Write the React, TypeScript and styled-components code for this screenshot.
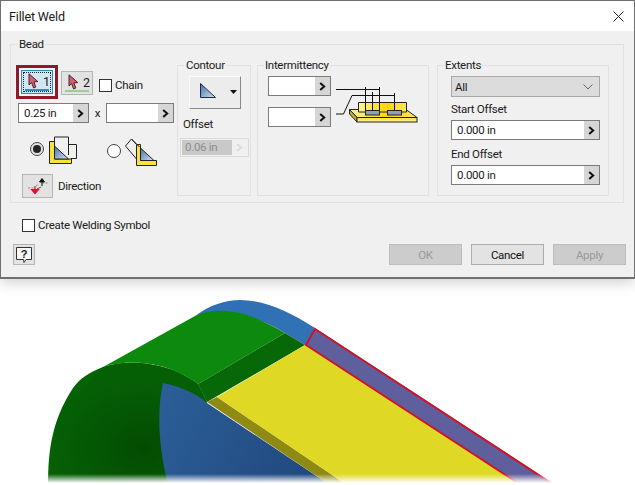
import React from "react";
import styled, { createGlobalStyle } from "styled-components";

const Global = createGlobalStyle`
  html, body { margin: 0; padding: 0; background: #fff; }
  body { width: 635px; height: 485px; overflow: hidden; font-family: "Roboto", "Noto Sans", sans-serif; font-size: 11.5px; letter-spacing: -0.3px; color: #1a1a1a; }
`;

const Page = styled.div`
  width: 635px;
  height: 485px;
  display: flex;
  flex-direction: column;
  overflow: hidden;
`;
const Window = styled.div`
  position: relative;
  z-index: 1;
  box-sizing: border-box;
  flex: none;
  height: 279px;
  border: 1px solid #6f6f6f;
  border-bottom-width: 2px;
  background: #f0f0f0;
  box-shadow: 0 3px 14px rgba(0, 0, 0, 0.2);
  display: flex;
  flex-direction: column;
`;
const TitleBar = styled.div`
  height: 30px;
  flex: none;
  background: #fff;
  display: flex;
  align-items: center;
  justify-content: space-between;
  padding: 0 10px 0 8px;
  font-size: 12.5px;
  letter-spacing: -0.15px;
`;
const Body = styled.div`
  flex: 1;
  padding: 13px 8px 0 9px;
  display: flex;
  flex-direction: column;
`;
const Bead = styled.div`
  position: relative;
  box-sizing: border-box;
  width: 614px;
  height: 159px;
  border: 1px solid #e2e2e2;
  padding-top: 20px;
  display: flex;
`;
const Legend = styled.span<{ $left: number }>`
  position: absolute;
  left: ${(p) => p.$left}px;
  top: -9px;
  line-height: 16px;
  padding: 0 1px;
  background: #f0f0f0;
`;
const LeftColumn = styled.div`
  width: 166px;
  flex: none;
  padding-left: 5px;
  box-sizing: border-box;
  display: flex;
  flex-direction: column;
`;
const PickRow = styled.div`
  height: 34px;
  display: flex;
  align-items: flex-start;
`;
const FocusFrame = styled.div`
  box-sizing: border-box;
  width: 42px;
  height: 34px;
  border: 3px solid #8e1b28;
  background: #f4f4f4;
  padding: 2px 2px;
`;
const PickButton = styled.div<{ $active?: boolean }>`
  position: relative;
  box-sizing: border-box;
  width: 32px;
  height: 24px;
  border: 1px solid ${(p) => (p.$active ? "#2f86b8" : "#b5b5b5")};
  background: ${(p) => (p.$active ? "#d3e6f3" : "#e2e2e2")};
  ${(p) => (p.$active ? "outline: 1px dotted #222; outline-offset: -3px;" : "")}
  display: flex;
  align-items: flex-start;
  font-size: 12.5px;
  padding: 2px 0 0 6px;
  gap: 4px;
  line-height: 17px;
`;
const Underline = styled.span<{ $color: string }>`
  position: absolute;
  left: 3px;
  right: 3px;
  bottom: 2px;
  height: 2px;
  background: ${(p) => p.$color};
`;
const SecondPick = styled.div`
  margin: 6px 0 0 3px;
`;
const CheckLabel = styled.label<{ $top?: number; $left?: number }>`
  display: flex;
  align-items: center;
  gap: 3px;
  height: 13px;
  line-height: 13px;
  margin-top: ${(p) => p.$top ?? 0}px;
  margin-left: ${(p) => p.$left ?? 0}px;
`;
const CheckBox = styled.span`
  box-sizing: border-box;
  width: 13px;
  height: 13px;
  border: 1px solid #333;
  background: #fff;
  flex: none;
`;
const SizeRow = styled.div`
  display: flex;
  margin: 4px 0 0 2px;
  align-items: center;
`;
const Times = styled.span`
  width: 17px;
  text-align: center;
`;
const InputBox = styled.div<{ $width: number; $height?: number }>`
  box-sizing: border-box;
  width: ${(p) => p.$width}px;
  height: ${(p) => p.$height ?? 20}px;
  flex: none;
  border: 1px solid #7b7b7b;
  background: #fff;
  display: flex;
  align-items: center;
  justify-content: space-between;
  line-height: 16px;
  padding-left: 5px;
`;
const Spinner = styled.span`
  width: 15px;
  align-self: stretch;
  background: #d6d6d6;
  display: flex;
  align-items: center;
  justify-content: center;
`;
const DisabledBox = styled.div`
  box-sizing: border-box;
  width: 69px;
  height: 19px;
  margin-top: 6px;
  border: 1px solid #dadada;
  padding: 1px;
  display: flex;
`;
const DisabledValue = styled.span`
  flex: 1;
  background: #c9c9c9;
  color: #8d8d8d;
  line-height: 15px;
  padding-left: 3px;
`;
const DisabledSpin = styled.span`
  width: 15px;
  display: flex;
  align-items: center;
  justify-content: center;
`;
const RadioRow = styled.div`
  display: flex;
  margin: 13px 0 0 14px;
  height: 30px;
`;
const Radio = styled.span<{ $checked?: boolean; $top: number }>`
  box-sizing: border-box;
  width: 14px;
  height: 14px;
  border-radius: 50%;
  border: 1px solid #444;
  background: ${(p) => (p.$checked ? "#e4e4e4" : "#fff")};
  margin-top: ${(p) => p.$top}px;
  display: flex;
  align-items: center;
  justify-content: center;
  flex: none;
  &::after {
    content: "";
    width: 8px;
    height: 8px;
    border-radius: 50%;
    background: ${(p) => (p.$checked ? "#222" : "transparent")};
  }
`;
const WeldOne = styled.svg`
  margin-left: 5px;
  flex: none;
`;
const WeldTwo = styled.svg`
  margin: 0 0 0 3px;
  flex: none;
`;
const SecondOption = styled.div`
  display: flex;
  margin-left: 28px;
`;
const DirectionRow = styled.div`
  display: flex;
  align-items: center;
  gap: 5px;
  margin: 8px 0 0 6px;
`;
const IconButton = styled.div<{ $w: number; $h: number }>`
  box-sizing: border-box;
  width: ${(p) => p.$w}px;
  height: ${(p) => p.$h}px;
  border: 1px solid #b5b5b5;
  background: #e2e2e2;
  display: flex;
  align-items: center;
  justify-content: center;
  flex: none;
`;
const Group = styled.div<{ $width: number; $gap: number }>`
  position: relative;
  box-sizing: border-box;
  width: ${(p) => p.$width}px;
  height: 131px;
  margin-left: ${(p) => p.$gap}px;
  border: 1px solid #e2e2e2;
  flex: none;
`;
const ContourBody = styled.div`
  padding: 10px 0 0 2px;
  display: flex;
  flex-direction: column;
`;
const ContourButton = styled.div`
  box-sizing: border-box;
  width: 52px;
  height: 33px;
  margin-left: 9px;
  background: #ececec;
  border: 1px solid;
  border-color: #fafafa #8a8a8a #8a8a8a #fafafa;
  display: flex;
  flex: none;
`;
const FieldLabel = styled.div<{ $top: number; $left?: number }>`
  line-height: 16px;
  margin-top: ${(p) => p.$top}px;
  margin-left: ${(p) => p.$left ?? 0}px;
`;
const IntermittencyBody = styled.div`
  padding: 10px 0 0 10px;
  display: flex;
  gap: 5px;
`;
const InputStack = styled.div`
  display: flex;
  flex-direction: column;
  gap: 11px;
`;
const Plates = styled.svg`
  margin-top: 9px;
  flex: none;
`;
const ExtentsBody = styled.div`
  padding: 10px 0 0 13px;
  display: flex;
  flex-direction: column;
`;
const SelectBox = styled.div`
  box-sizing: border-box;
  width: 149px;
  height: 21px;
  border: 1px solid #a8a8a8;
  background: #dcdcdc;
  display: flex;
  align-items: center;
  justify-content: space-between;
  padding: 0 6px 0 3px;
`;
const OffsetInput = styled.div`
  margin-top: 3px;
`;
const Footer = styled.div`
  display: flex;
  align-items: flex-start;
  margin: 12px 0 0 3px;
`;
const HelpSlot = styled.div`
  flex: 1;
`;
const DialogButton = styled.div<{ $disabled?: boolean }>`
  box-sizing: border-box;
  width: 73px;
  height: 21px;
  margin-left: 9px;
  border: 1px solid ${(p) => (p.$disabled ? "#bdbdbd" : "#adadad")};
  background: ${(p) => (p.$disabled ? "#cccccc" : "#e3e3e3")};
  color: ${(p) => (p.$disabled ? "#9a9a9a" : "#111")};
  display: flex;
  align-items: center;
  justify-content: center;
`;
const Scene = styled.svg`
  display: block;
  flex: none;
`;

const Chevron = ({ disabled }: { disabled?: boolean }) => (
  <svg width="7" height="9" viewBox="0 0 7 9">
    <path d="M1.2 1 L5.2 4.5 L1.2 8" fill="none" stroke={disabled ? "#dcdcdc" : "#111"} strokeWidth="2" />
  </svg>
);

const Spin = ({ width, value, height }: { width: number; value?: string; height?: number }) => (
  <InputBox $width={width} $height={height}>
    <span>{value}</span>
    <Spinner>
      <Chevron />
    </Spinner>
  </InputBox>
);

const Cursor = () => (
  <svg width="11" height="16" viewBox="0 0 11 16">
    <path d="M1 0.8 L1 12 L3.6 9.6 L5.6 15 L7.8 14 L5.9 8.9 L9.8 8.6 Z" fill="#d0606e" stroke="#4a2430" strokeWidth="1" />
  </svg>
);

const Defs = () => (
  <svg width="0" height="0" style={{ position: "absolute" }}>
    <defs>
      <linearGradient id="triBlue" x1="0" y1="0" x2="1" y2="1">
        <stop offset="0" stopColor="#3f6fae" />
        <stop offset="1" stopColor="#d8e2ec" />
      </linearGradient>
      <linearGradient id="plateYellow" x1="0" y1="0" x2="0" y2="1">
        <stop offset="0" stopColor="#ffd92e" />
        <stop offset="1" stopColor="#fff6a0" />
      </linearGradient>
      <linearGradient id="plateTop" x1="0" y1="0" x2="1" y2="0">
        <stop offset="0" stopColor="#fff39a" />
        <stop offset="0.6" stopColor="#ffd500" />
        <stop offset="1" stopColor="#ffe866" />
      </linearGradient>
    </defs>
  </svg>
);

export default function App() {
  return (
    <Page>
      <Global />
      <Defs />
      <Window>
        <TitleBar>
          <span>Fillet Weld</span>
          <svg width="11" height="11" viewBox="0 0 11 11">
            <path d="M0.5 0.5 L10.5 10.5 M10.5 0.5 L0.5 10.5" stroke="#222" strokeWidth="1" />
          </svg>
        </TitleBar>
        <Body>
          <Bead>
            <Legend $left={7}>Bead</Legend>
            <LeftColumn>
              <PickRow>
                <FocusFrame>
                  <PickButton $active>
                    <Cursor />
                    <span>1</span>
                    <Underline $color="#2f8fc4" />
                  </PickButton>
                </FocusFrame>
                <SecondPick>
                  <PickButton>
                    <Cursor />
                    <span>2</span>
                    <Underline $color="#9bcf8e" />
                  </PickButton>
                </SecondPick>
                <CheckLabel $top={14} $left={6}>
                  <CheckBox />
                  Chain
                </CheckLabel>
              </PickRow>
              <SizeRow>
                <Spin width={71} value="0.25 in" />
                <Times>x</Times>
                <Spin width={68} />
              </SizeRow>
              <RadioRow>
                <Radio $checked $top={6} />
                <WeldOne width="30" height="30" viewBox="49 135 30 30">
                  <path d="M49.5 140.5 H54.5 V158 H71.5 V162.5 H49.5 Z" fill="#f7e33a" stroke="#222" />
                  <path d="M54.5 145 V158 H68.5 Z" fill="url(#triBlue)" stroke="#222" />
                  <path d="M54.5 145 V136 H68.5 V154 M68.5 143.5 H76.5 V157.5 H71" fill="none" stroke="#222" />
                </WeldOne>
                <SecondOption>
                  <Radio $top={8} />
                  <WeldTwo width="34" height="30" viewBox="122 135 34 30">
                    <path d="M134.5 143.5 H138.5 V159.5 H154.5 V164.5 H134.5 Z" fill="#f7e33a" stroke="#222" />
                    <path d="M138.5 147 V159.5 H152 Z" fill="url(#triBlue)" stroke="#222" />
                    <path d="M123.5 145 L129.5 138 L134 143 M123.5 145 L134.5 158 M129.5 138 L137.5 146" fill="none" stroke="#222" />
                  </WeldTwo>
                </SecondOption>
              </RadioRow>
              <DirectionRow>
                <IconButton $w={31} $h={24}>
                  <svg width="24" height="18" viewBox="0 0 24 18">
                    <path d="M2 11 H8 M10 9 L13 7 M16 6 H23" stroke="#8a8a8a" strokeDasharray="2 1.5" fill="none" />
                    <path d="M16 9 V3 M13.5 5 L16 1.5 L18.5 5 Z" stroke="#111" fill="#111" strokeWidth="1" />
                    <path d="M9 9 V15 M5.5 12.5 L9 16.5 L12.5 12.5 Z" stroke="#e0142c" fill="#e0142c" strokeWidth="1.2" />
                    <path d="M11 12 L15 10" stroke="#e0142c" />
                  </svg>
                </IconButton>
                <span>Direction</span>
              </DirectionRow>
            </LeftColumn>
            <Group $width={74} $gap={0}>
              <Legend $left={7}>Contour</Legend>
              <ContourBody>
                <ContourButton>
                  <svg width="50" height="31" viewBox="190 77 50 31">
                    <path d="M200.5 83.5 V97.5 H215.5 Z" fill="url(#triBlue)" stroke="#1c2c44" />
                    <path d="M230 90 H237 L233.5 94 Z" fill="#111" />
                  </svg>
                </ContourButton>
                <FieldLabel $top={7} $left={3}>Offset</FieldLabel>
                <DisabledBox>
                  <DisabledValue>0.06 in</DisabledValue>
                  <DisabledSpin>
                    <Chevron disabled />
                  </DisabledSpin>
                </DisabledBox>
              </ContourBody>
            </Group>
            <Group $width={172} $gap={6}>
              <Legend $left={6}>Intermittency</Legend>
              <IntermittencyBody>
                <InputStack>
                  <Spin width={63} />
                  <Spin width={63} />
                </InputStack>
                <Plates width="82" height="40" viewBox="336 85 82 40">
                  <path d="M349.5 109.5 H406 L417 117.5 H357 Z" fill="url(#plateTop)" stroke="#222" />
                  <path d="M349.5 109.5 L357 117.5 V122 L349.5 114 Z" fill="#c8b030" stroke="#222" />
                  <rect x="357" y="117.5" width="60" height="4.5" fill="url(#plateYellow)" stroke="#222" />
                  <path d="M358.5 102.5 H406.5 V112 H358.5 Z" fill="url(#plateTop)" stroke="#222" />
                  <rect x="365.5" y="110.5" width="14" height="4.5" fill="#8ea3b8" stroke="#222" />
                  <rect x="387.5" y="110.5" width="14" height="4.5" fill="#8ea3b8" stroke="#222" />
                  <path d="M336 89.5 H379.5 M352 95.5 H394.5 M352 95.5 L343.5 114 H336 M365.5 87 V110 M372.5 92 V110 M379.5 87 V110 M394.5 93 V110" fill="none" stroke="#111" />
                </Plates>
              </IntermittencyBody>
            </Group>
            <Group $width={172} $gap={8}>
              <Legend $left={6}>Extents</Legend>
              <ExtentsBody>
                <SelectBox>
                  <span>All</span>
                  <svg width="10" height="6" viewBox="0 0 10 6">
                    <path d="M0.5 0.5 L5 5 L9.5 0.5" fill="none" stroke="#666" />
                  </svg>
                </SelectBox>
                <FieldLabel $top={4}>Start Offset</FieldLabel>
                <OffsetInput>
                  <Spin width={149} value="0.000 in" />
                </OffsetInput>
                <FieldLabel $top={6}>End Offset</FieldLabel>
                <OffsetInput>
                  <Spin width={149} value="0.000 in" />
                </OffsetInput>
              </ExtentsBody>
            </Group>
          </Bead>
          <CheckLabel $top={16} $left={12}>
            <CheckBox />
            Create Welding Symbol
          </CheckLabel>
          <Footer>
            <HelpSlot>
              <IconButton $w={22} $h={21}>
                <svg width="16" height="16" viewBox="0 0 16 16">
                  <path d="M0.5 0.5 H15.5 V12.5 H10 L8 15.5 L7.5 12.5 H0.5 Z" fill="#f6f6f6" stroke="#333" />
                  <text x="8" y="10.5" textAnchor="middle" fontSize="11" fontWeight="700" fontFamily="Liberation Sans, sans-serif" fill="#222">?</text>
                </svg>
              </IconButton>
            </HelpSlot>
            <DialogButton $disabled>OK</DialogButton>
            <DialogButton>Cancel</DialogButton>
            <DialogButton $disabled>Apply</DialogButton>
          </Footer>
        </Body>
      </Window>
      <Scene width="635" height="206" viewBox="0 279 635 206">
        <defs>
          <linearGradient id="fade" x1="0" y1="0" x2="0" y2="1">
            <stop offset="0" stopColor="#fff" stopOpacity="0" />
            <stop offset="1" stopColor="#fff" />
          </linearGradient>
          <radialGradient id="frontGreen" cx="0.6" cy="0.7" r="0.7">
            <stop offset="0" stopColor="#024c02" />
            <stop offset="1" stopColor="#066406" />
          </radialGradient>
          <linearGradient id="frontBlue" x1="0" y1="0" x2="1" y2="0.3">
            <stop offset="0" stopColor="#2c5f98" />
            <stop offset="1" stopColor="#214a80" />
          </linearGradient>
          <linearGradient id="rimBlue" x1="0" y1="0" x2="1" y2="0">
            <stop offset="0" stopColor="#2f6fb4" />
            <stop offset="1" stopColor="#3579b8" />
          </linearGradient>
        </defs>
        <path d="M195 316 C210 305 225 300 240 300 C265 300 290 312 315 328 L560 488 L520 488 L305 345 L285 333 C260 317 225 307 195 316 Z" fill="url(#rimBlue)" />
        <path d="M48 485 C48 450 52 420 73 388 C80 378 90 372 103 367 C125 360 150 362 173 370 C180 373 190 378 198 384 L207 402 L168 485 Z" fill="url(#frontGreen)" />
        <path d="M163 383 C175 385 195 392 207 403 L330 485 L168 485 C158 445 157 410 163 383 Z" fill="url(#frontBlue)" />
        <path d="M103 367 C125 360 150 362 173 370 C180 373 190 378 198 384 L207 402 C195 392 178 384 163 383 C145 378 120 378 100 388 C92 392 84 400 78 408 C82 390 92 376 103 367 Z" fill="#056005" />
        <path d="M103 367 L195 316 C210 309 232 309 253 317 C265 322 275 327 285 333 L198 384 C190 378 180 373 173 370 C150 361 125 360 103 367 Z" fill="#0d8a0d" />
        <path d="M285 333 L305 345 L207 402 L198 384 Z" fill="#066806" />
        <path d="M207 402 L217 397 L347 485 L330 485 Z" fill="#8f8a14" />
        <path d="M305 345 L521 485 L347 485 L217 397 Z" fill="#dfd926" />
        <path d="M315 329 L554 485 L521 485 L306 345 Z" fill="#5f5f9e" stroke="#d01428" strokeWidth="2" strokeLinejoin="miter" />
        <rect x="0" y="474" width="635" height="9" fill="url(#fade)" />
        <rect x="0" y="483" width="635" height="2" fill="#fff" />
      </Scene>
    </Page>
  );
}
